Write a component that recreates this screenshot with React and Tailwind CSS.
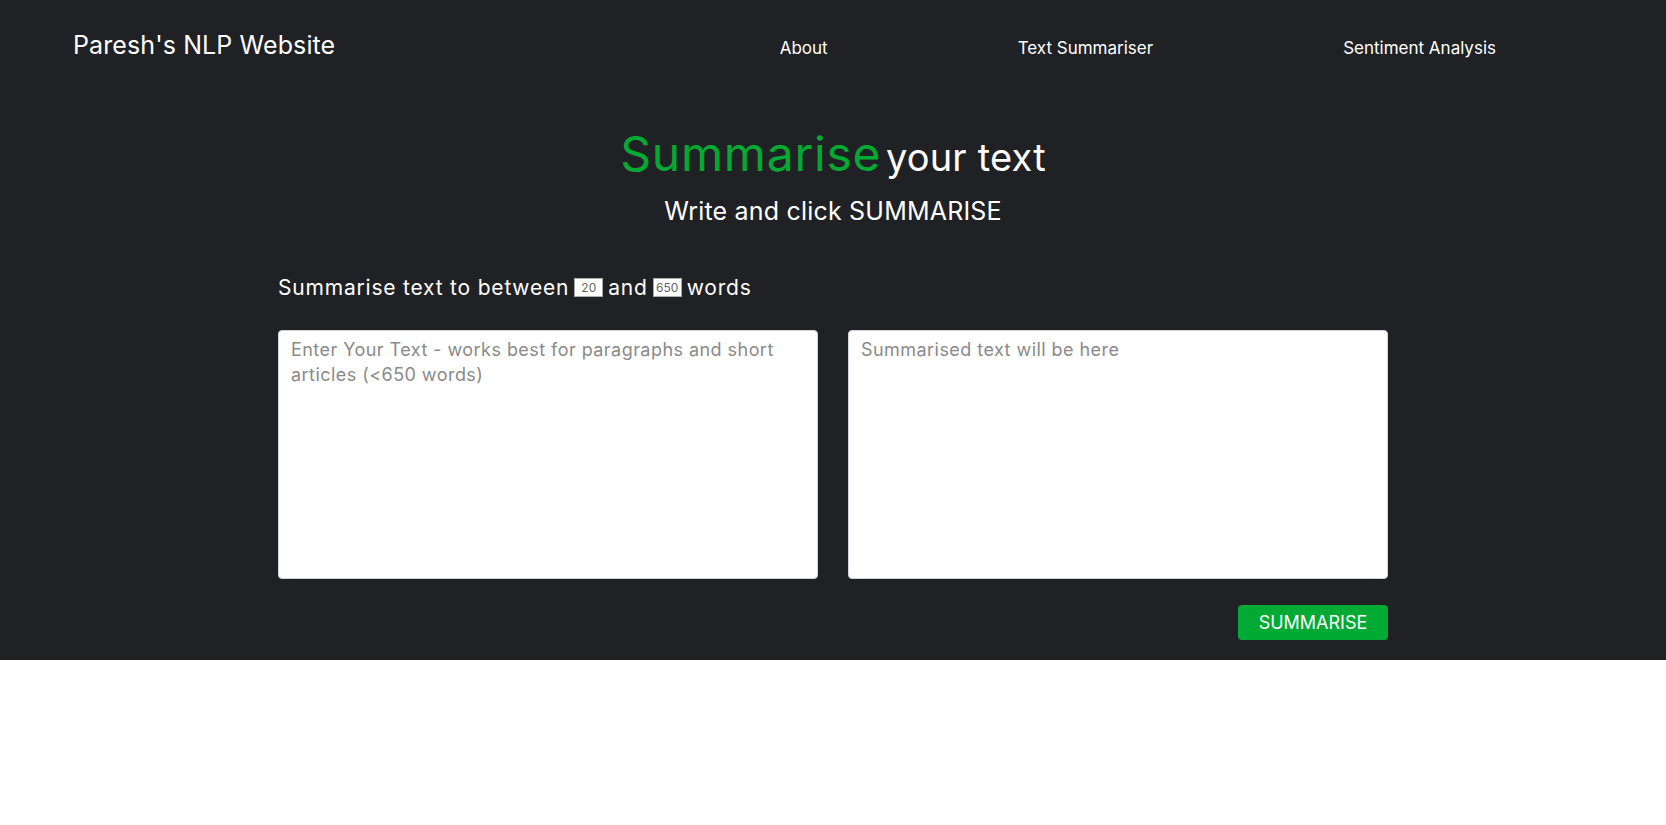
import { useState } from 'react'

// Textzusammenfassung — Startseite

const NAV = ['About', 'Text Summariser', 'Sentiment Analysis']

export default function App() {
  const [text, setText] = useState('')
  const [minWords, setMinWords] = useState('20')
  const [maxWords, setMaxWords] = useState('650')

  return (
    <div className="min-h-screen bg-white" style={{ fontFamily: 'Inter, "Noto Sans", sans-serif' }}>
      <div className="bg-[#202124] text-white pb-[20px]">
        {/* Navigation */}
        <nav className="flex items-center h-[92px] pl-[73px] pr-[170px]">
          <a href="#" className="text-[25px] tracking-[0.1px]">Paresh's NLP Website</a>
          <ul className="ml-auto flex gap-[190px] text-[17px] pt-[6px]">
            {NAV.map(n => (
              <li key={n}><a href="#">{n}</a></li>
            ))}
          </ul>
        </nav>

        <div className="w-[1110px] mx-auto">
          <h1 className="text-center leading-none mt-[38px]">
            <span className="text-[#00aa33] text-[48px] tracking-[0.8px]">Summarise</span>{' '}
            <span className="text-[38px] tracking-[0.2px]">your text</span>
          </h1>
          <h3 className="text-center text-[25px] tracking-[0.2px] mt-[15px]">Write and click SUMMARISE</h3>

          <p className="text-[21px] tracking-[0.8px] mt-[41px] flex items-center gap-[5px]">
            <span>Summarise text to between</span>
            <input value={minWords} onChange={e => setMinWords(e.target.value)}
              className="w-[29px] h-[19px] bg-white text-[#666] text-[12px] tracking-normal text-center border border-[#aaa] outline-none" />
            <span>and</span>
            <input value={maxWords} onChange={e => setMaxWords(e.target.value)}
              className="w-[29px] h-[19px] bg-white text-[#666] text-[12px] tracking-normal text-center border border-[#aaa] outline-none" />
            <span>words</span>
          </p>

          <div className="grid grid-cols-2 gap-[30px] mt-[27px]">
            <textarea value={text} onChange={e => setText(e.target.value)}
              placeholder="Enter Your Text - works best for paragraphs and short articles (<650 words)"
              className="h-[249px] bg-white text-[#333] text-[18px] tracking-[0.45px] leading-[25px] px-[12px] py-[6px] rounded-[4px] border border-[#ced4da] resize-none outline-none placeholder:text-[#8a8a8a]" />
            <textarea readOnly placeholder="Summarised text will be here"
              className="h-[249px] bg-white text-[#333] text-[18px] tracking-[0.45px] leading-[25px] px-[12px] py-[6px] rounded-[4px] border border-[#ced4da] resize-none outline-none placeholder:text-[#8a8a8a]" />
          </div>

          <div className="flex justify-end mt-[26px]">
            <button className="w-[150px] h-[35px] bg-[#00aa33] rounded-[4px] text-white text-[18px]">
              SUMMARISE
            </button>
          </div>
        </div>
      </div>
    </div>
  )
}
